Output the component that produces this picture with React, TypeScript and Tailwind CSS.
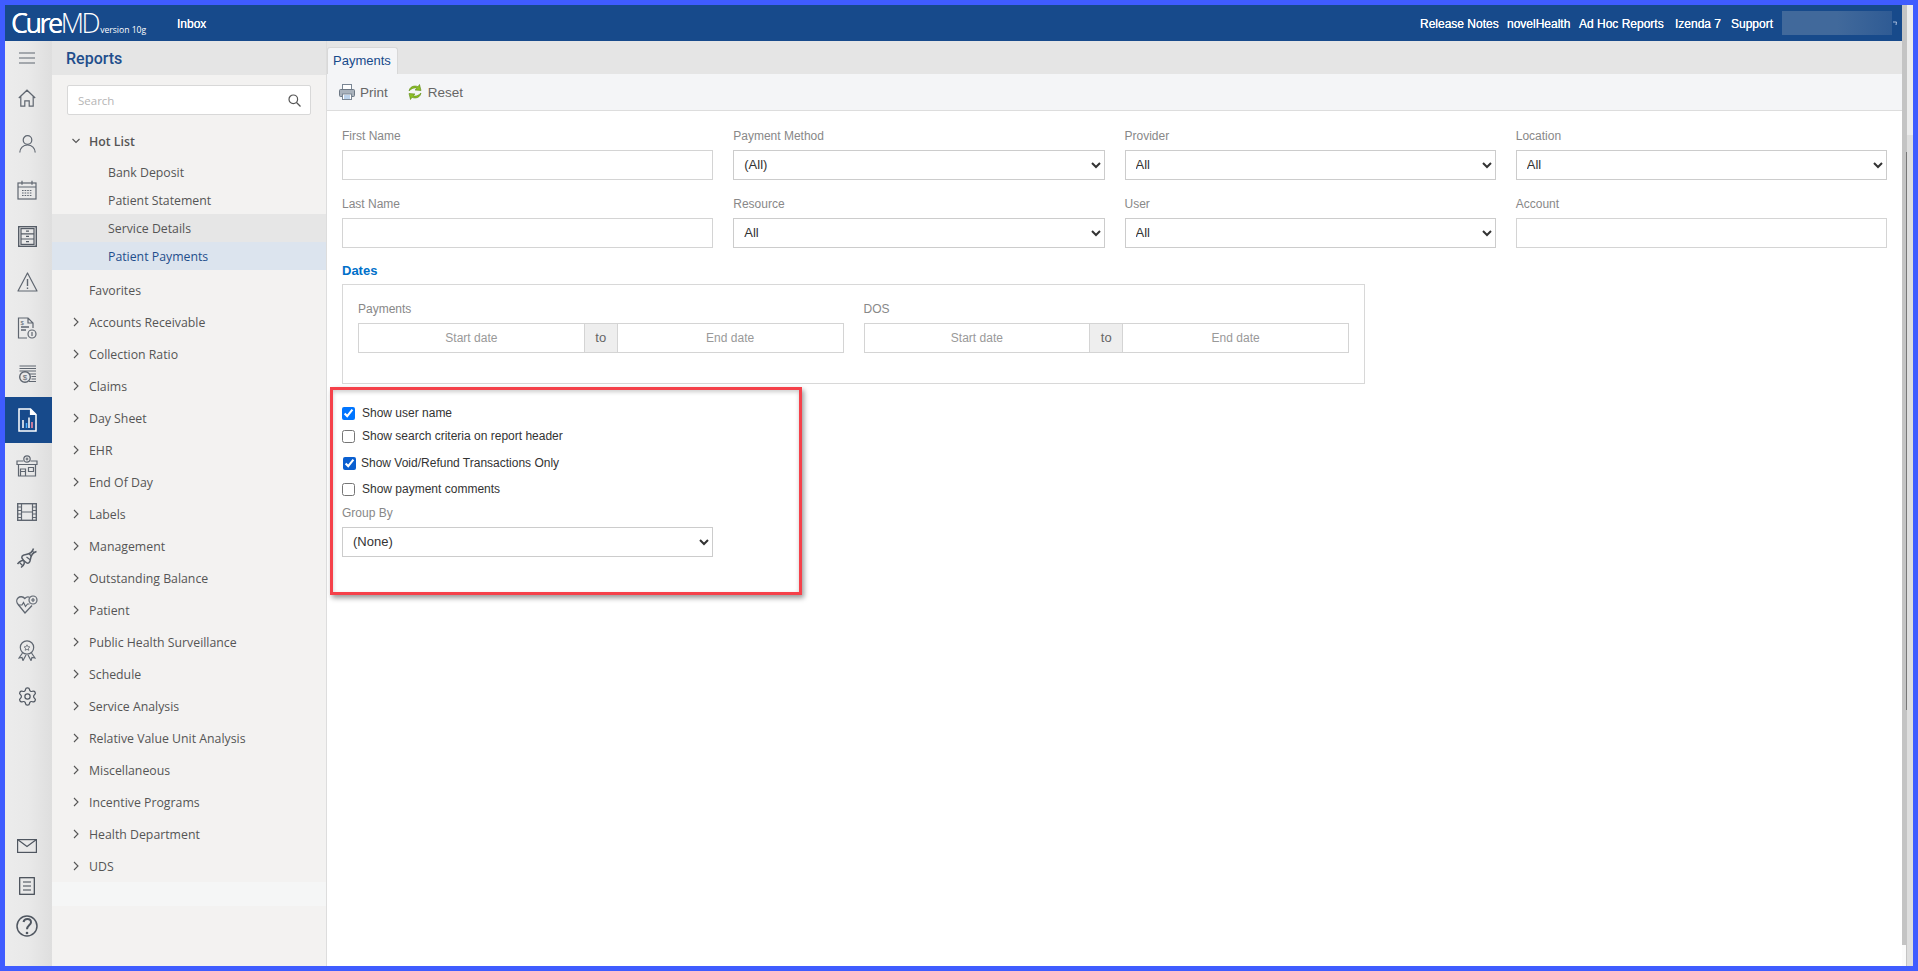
import React from 'react'
import { Settings } from 'lucide-react'

const headerLinks = [
  { label: 'Release Notes', className: 'w-[87px]' },
  { label: 'novelHealth', className: 'w-[72px]' },
  { label: 'Ad Hoc Reports', className: 'w-[96px]' },
  { label: 'Izenda 7', className: 'w-[56px]' },
  { label: 'Support', className: 'w-[51px]' },
]

const reportGroups = [
  'Accounts Receivable',
  'Collection Ratio',
  'Claims',
  'Day Sheet',
  'EHR',
  'End Of Day',
  'Labels',
  'Management',
  'Outstanding Balance',
  'Patient',
  'Public Health Surveillance',
  'Schedule',
  'Service Analysis',
  'Relative Value Unit Analysis',
  'Miscellaneous',
  'Incentive Programs',
  'Health Department',
  'UDS',
]

function RailIcon({ w = 24, h = 24, vb = '0 0 24 24', children, stroke = '#5f6670' }: { w?: number; h?: number; vb?: string; children: React.ReactNode; stroke?: string }) {
  return (
    <svg width={w} height={h} viewBox={vb} fill="none" stroke={stroke} strokeWidth="1.2">
      {children}
    </svg>
  )
}

const railIcons: React.ReactNode[] = [
  // home
  <RailIcon key="home" w={18} h={18} vb="0 0 18 18">
    <path d="M.8 9 9 1.2 17.2 9M2.8 7.5v9.7h4v-5.4h4.400v5.400h4V7.500" />
  </RailIcon>,
  // person
  <RailIcon key="person" w={17} h={18} vb="0 0 17 18">
    <circle cx="8.500" cy="5" r="4.300" />
    <path d="M.8 17.500c0-4.500 3.400-7.500 7.700-7.500s7.700 3 7.700 7.500" />
  </RailIcon>,
  // calendar
  <RailIcon key="calendar" w={20} h={20} vb="0 0 20 20">
    <rect x="1" y="3" width="18" height="16" />
    <path d="M1 7h18M5 .8v4M15 .8v4" />
    <path d="M5 10.500h10M5 13h10M5 15.500h10" strokeDasharray="1.600 1" />
  </RailIcon>,
  // file cabinet
  <RailIcon key="cabinet" w={19} h={21} vb="0 0 19 21" stroke="#555c66">
    <rect x=".7" y=".7" width="17.600" height="19.600" strokeWidth="1.400" />
    <rect x="3" y="2.600" width="13" height="15.800" />
    <path d="M3 7.800h13M3 13h13M8 5.200h3M8 10.400h3M8 15.600h3" />
  </RailIcon>,
  // warning
  <RailIcon key="warning" w={21} h={20} vb="0 0 21 20">
    <path d="M10.500 1 20 19H1z" strokeLinejoin="round" />
    <path d="M10.500 7v7M10.500 15.500v1.500" strokeWidth="1.400" />
  </RailIcon>,
  // statement
  <RailIcon key="statement" w={20} h={22} vb="0 0 20 22">
    <path d="M10 21H1.500V1h9.500l5 5v5M11 1v5h5" />
    <path d="M4 10h8M4 13h5" strokeWidth="1.500" />
    <circle cx="15" cy="17" r="4" />
    <path d="M15 15v4" />
    <text x="3.500" y="7.500" fontSize="6" fill="#5f6670" stroke="none" fontFamily="Liberation Sans, sans-serif">$</text>
  </RailIcon>,
  // payments
  <RailIcon key="payments" w={19} h={18} vb="0 0 19 18">
    <path d="M1.500 1h16.500M1.500 3.500h16.500M1.500 6h16.500M11 9h7M13.500 11.500H18M13.500 14H18M11 16.500h7" />
    <circle cx="7" cy="12" r="5.300" strokeWidth="1.400" />
    <text x="4.700" y="15" fontSize="8" fill="#5f6670" stroke="none" fontFamily="Liberation Sans, sans-serif">$</text>
  </RailIcon>,
  // reports, active
  <RailIcon key="reports" w={19} h={24} vb="0 0 19 24" stroke="#ffffff">
    <path d="M1 1h11.500L18 6.500V23H1z" strokeWidth="1.500" />
    <path d="M12.500 1v5.500H18" fill="#ffffff" />
    <path d="M5 12v8" stroke="#ffffff" strokeWidth="1.500" />
    <path d="M8.500 15v5" stroke="#4fb3ff" strokeWidth="1.500" />
    <path d="M11 9.500V20" stroke="#ffffff" strokeWidth="1.500" />
    <path d="M14 14v6" stroke="#ff8aa0" strokeWidth="1.500" />
  </RailIcon>,
  // clinic
  <RailIcon key="clinic" w={22} h={22} vb="0 0 22 22">
    <circle cx="11" cy="4" r="3.200" />
    <path d="M11 2.600v2.800M9.600 4h2.800" />
    <path d="M7.500 6H1v3.500h20V6h-6.500M2.500 9.500V21h17V9.500" />
    <path d="M4.500 21v-7h5v7M4.500 16.500h5M12.500 12.500h5v4h-5z" />
  </RailIcon>,
  // film
  <RailIcon key="film" w={20} h={18} vb="0 0 20 18">
    <rect x=".7" y=".7" width="18.600" height="16.600" strokeWidth="1.400" />
    <path d="M4.500.7v16.600M15.500.7v16.600M4.500 9h11M.7 4h3.800M.7 7.500h3.800M.7 11h3.800M.7 14.500h3.800M15.500 4h3.800M15.500 7.500h3.800M15.500 11h3.800M15.500 14.500h3.800" />
  </RailIcon>,
  // dna
  <RailIcon key="dna" w={22} h={22} vb="0 0 22 22" stroke="#555c66">
    <path d="M1.500 17C4 13.500 7 12.500 9.500 15s4.500 1 5-3 2.500-6.500 6-7.500" strokeWidth="1.500" />
    <path d="M5 20.500C8.500 18 9.500 15 7 12.500s-1-4.500 3-5 6.500-2.500 7.500-6" strokeWidth="1.500" />
    <path d="m3.500 15.500 3 3M10.500 10l4 3M13 6.500l2.500 3M16.500 4l1.500 2" />
  </RailIcon>,
  // heart
  <RailIcon key="heart" w={22} h={19} vb="0 0 22 19">
    <path d="M13.500 2.300C12 1.500 10.300 2 8.800 3.500 7 1.300 3.800 1.200 2 3c-1.800 1.800-1.500 4.700.2 6.500L9 18l7-7.500" strokeWidth="1.300" />
    <path d="M2.500 10H6l1.500-2.500 2 4 2-2.500h2" />
    <circle cx="17" cy="5" r="4" />
    <path d="M17 3v4M15 5h4" />
  </RailIcon>,
  // award
  <RailIcon key="award" w={18} h={21} vb="0 0 18 21">
    <circle cx="9" cy="7.500" r="6.700" />
    <path d="m9 4.800.9 1.900 2 .2-1.500 1.400.4 2L9 9.300l-1.800 1 .4-2-1.500-1.400 2-.2z" strokeWidth=".8" />
    <path d="M4.500 13 1 18l3-.5 1 3L8 15M13.500 13l3.500 5-3-.5-1 3-3-5.500" />
  </RailIcon>,
  // gear
  <Settings key="gear" size={21} strokeWidth={1.4} color="#4f5660" />,
]

const bottomIcons: React.ReactNode[] = [
  <RailIcon key="mail" w={20} h={14} vb="0 0 20 14" stroke="#4f5660">
    <rect x=".6" y=".6" width="18.800" height="12.800" />
    <path d="m.6.6 9.400 7 9.400-7" />
  </RailIcon>,
  <RailIcon key="list" w={16} h={18} vb="0 0 16 18" stroke="#3f4650">
    <rect x=".7" y=".7" width="14.600" height="16.600" />
    <path d="M4 5h8M4 9h8M4 13h8" />
  </RailIcon>,
  <RailIcon key="help" w={22} h={22} vb="0 0 22 22" stroke="#4f5660">
    <circle cx="11" cy="11" r="10" strokeWidth="1.500" />
    <path d="M7.500 7c.5-2 2-3 3.800-3 2.200 0 3.700 1.400 3.700 3.300 0 2.700-3.800 3-4 7" strokeWidth="2" />
    <circle cx="11" cy="18" r="1.300" fill="#4f5660" stroke="none" />
  </RailIcon>,
]

function Chevron({ open }: { open?: boolean }) {
  return (
    <svg width="8" height="10" viewBox="0 0 8 10" fill="none" stroke="#555" strokeWidth="1.100" className="shrink-0 mb-[2px]">
      {open ? <path d="M.5 3 4 6.500 7.500 3" /> : <path d="m2 1 4 4-4 4" />}
    </svg>
  )
}

function Field({ label, select, value }: { label: string; select?: boolean; value?: string }) {
  return (
    <div>
      <div className="h-[18px] leading-[20px] mb-[6px] text-[12px] text-[#888888]">{label}</div>
      {select ? (
        <select defaultValue={value} className="block w-full h-[30px] pl-[6px] pb-[2px] border border-[#cccccc] bg-white text-[13px] text-[#333333] outline-none">
          <option>{value}</option>
        </select>
      ) : (
        <input className="block w-full h-[30px] border border-[#d4d4d4] bg-white outline-none" />
      )}
    </div>
  )
}

function DateRange({ label }: { label: string }) {
  return (
    <div>
      <div className="h-[18px] leading-[18px] mb-[5px] text-[12px] text-[#888888]">{label}</div>
      <div className="flex h-[30px] border border-[#d4d4d4] text-[12px] text-[#999999]">
        <div className="flex-1 flex items-center justify-center">Start date</div>
        <div className="w-[34px] flex items-center justify-center bg-[#eeeeee] border-x border-[#d4d4d4] text-[13px] text-[#666666]">to</div>
        <div className="flex-1 flex items-center justify-center">End date</div>
      </div>
    </div>
  )
}

function CheckRow({ label, checked, className, accent, gap }: { label: string; checked?: boolean; className: string; accent?: string; gap?: string }) {
  return (
    <label className={`flex items-center h-[18px] text-[12px] text-[#333333] ${className}`}>
      <input type="checkbox" defaultChecked={checked} className={`m-0 w-[13px] h-[13px] ${accent ?? 'accent-[#0075ff]'} ${gap ?? 'mr-[7px]'}`} />
      {label}
    </label>
  )
}

export default function App() {
  return (
    <div className="w-[1918px] h-[971px] bg-[#3f5cff] p-[5px] flex overflow-hidden font-['Liberation_Sans',Arial,sans-serif]">
      <div className="flex-1 flex flex-col min-w-0">
        {/* top bar */}
        <header className="h-[36px] shrink-0 bg-[#174a8b] flex items-center text-white text-[12px]">
          <div className="flex items-baseline pl-[6px] w-[172px] font-['Open_Sans',sans-serif]">
            <span className="text-[27px] leading-[36px] tracking-[-2.500px] font-normal [text-shadow:0_0_0.6px_white]">Cure</span>
            <span className="text-[27px] leading-[36px] tracking-[-2.500px] font-light">MD</span>
            <span className="text-[8.600px] ml-[2px]">version 10g</span>
          </div>
          <span className="pt-[2px] [text-shadow:0_0_0.4px_white]">Inbox</span>
          <nav className="ml-auto flex items-center">
            {headerLinks.map((link) => (
              <span key={link.label} className={`${link.className} pt-[2px] [text-shadow:0_0_0.4px_white]`}>{link.label}</span>
            ))}
            <div className="w-[110px] h-[24px] bg-gradient-to-r from-[#41699b] via-[#41699b] to-[#2f5b94]" />
            <div className="w-[10px] flex justify-start pl-[1px]">
              <svg width="4" height="4" viewBox="0 0 4 4" fill="none" stroke="#a9bcdc" strokeWidth="1">
                <path d="M0 1h3.500L3 4" />
              </svg>
            </div>
          </nav>
        </header>

        <div className="flex-1 flex min-h-0">
          {/* icon rail */}
          <aside className="w-[47px] shrink-0 flex flex-col bg-gradient-to-r from-[#ececec] via-[#e9e9e9] to-[#dedede]">
            <div className="h-[34px] shrink-0 flex items-center justify-center pr-[3px]">
              <svg width="16" height="12" viewBox="0 0 16 12" stroke="#5f6670" strokeWidth="1.100">
                <path d="M0 1h16M0 6h16M0 11h16" />
              </svg>
            </div>
            {railIcons.map((icon, i) => (
              <div key={i} className={`h-[46px] shrink-0 flex items-center justify-center pr-[3px] ${i === 7 ? 'bg-[#174a8b]' : ''}`}>
                {icon}
              </div>
            ))}
            <div className="mt-auto pb-[20px]">
              {bottomIcons.map((icon, i) => (
                <div key={i} className="h-[40px] flex items-center justify-center pr-[3px]">{icon}</div>
              ))}
            </div>
          </aside>

          {/* reports tree */}
          <aside className="w-[275px] shrink-0 flex flex-col bg-[#f3f2f1] border-r border-[#dddddd] font-['Open_Sans',sans-serif] text-[12.300px] text-[#555555]">
            <div className="h-[34px] shrink-0 pl-[14px] pt-[2px] flex items-center bg-[#e5e5e5] font-['Roboto',sans-serif] font-medium text-[16px] text-[#1f4e8c]">Reports</div>
            <div className="mx-[15px] mt-[10px] h-[30px] shrink-0 flex items-center justify-between pl-[10px] pr-[9px] bg-white border border-[#d8d8d8] rounded-[2px] text-[11.500px] text-[#b5b5b5]">
              <span className="pt-[2px]">Search</span>
              <svg width="13" height="13" viewBox="0 0 13 13" fill="none" stroke="#555" strokeWidth="1.200">
                <circle cx="5.300" cy="5.300" r="4.300" />
                <path d="m8.500 8.500 4 4" />
              </svg>
            </div>
            <div className="mt-[12px] h-[28px] pt-[2px] shrink-0 flex items-center pl-[20px] gap-[9px] font-semibold">
              <Chevron open />
              Hot List
            </div>
            <div className="mt-[3px] h-[28px] pt-[2px] shrink-0 flex items-center pl-[56px]">Bank Deposit</div>
            <div className="h-[28px] pt-[2px] shrink-0 flex items-center pl-[56px]">Patient Statement</div>
            <div className="h-[28px] pt-[2px] shrink-0 flex items-center pl-[56px] bg-[#e6e6e6]">Service Details</div>
            <div className="h-[28px] pt-[2px] shrink-0 flex items-center pl-[56px] bg-[#dce4ee] text-[#1f4e8c]">Patient Payments</div>
            <div className="mt-[4px] h-[32px] pt-[2px] shrink-0 flex items-center pl-[37px]">Favorites</div>
            {reportGroups.map((group) => (
              <div key={group} className="h-[32px] pt-[2px] shrink-0 flex items-center pl-[20px] gap-[9px]">
                <Chevron />
                {group}
              </div>
            ))}
            <div className="h-[24px] shrink-0 bg-[#f5f6f6]" />
          </aside>

          {/* payments form */}
          <main className="relative flex-1 min-w-0 bg-white">
            <div className="h-[33px] bg-[#e5e5e5] flex items-end">
              <div className="h-[27px] w-[71px] pl-[5px] leading-[26px] bg-[#f4f5f7] border border-b-0 border-[#d8d8d8] rounded-t-[3px] text-[13px] text-[#174a8b]">Payments</div>
            </div>
            <div className="h-[37px] bg-[#f4f5f7] border-b border-[#dddddd] flex items-center pl-[12px] text-[13.500px] text-[#666666]">
              <svg width="16" height="16" viewBox="0 0 16 16" className="mr-[5px]">
                <rect x="3.500" y=".5" width="9" height="6" fill="#ffffff" stroke="#7a8694" />
                <rect x=".5" y="5.500" width="15" height="7" rx="1" fill="#a9b2bc" stroke="#6d7885" />
                <rect x="3.500" y="10" width="9" height="5.500" fill="#ffffff" stroke="#7a8694" />
                <path d="M5 12h6M5 14h6" stroke="#7aa7d8" />
              </svg>
              <span className="pt-[2px]">Print</span>
              <svg width="16" height="16" viewBox="0 0 16 16" fill="none" className="ml-[19px] mr-[5px]">
                <path d="M2 7c.5-3.200 3-5 6-5 1 0 2 .2 3 .8L12.500.5 14 6.500 8 6l2-1.600C8 3.300 5 4 2 7z" fill="#8cbf26" stroke="#5c8a12" strokeWidth=".6" />
                <path d="M14 9c-.5 3.200-3 5-6 5-1 0-2-.2-3-.8l-1.500 2.300L2 9.500l6 .5-2 1.600c2 1.100 5 .4 8-2.600z" fill="#8cbf26" stroke="#5c8a12" strokeWidth=".6" />
              </svg>
              <span className="pt-[2px]">Reset</span>
            </div>

            <div className="px-[15px] pt-[15px]">
              <div className="grid grid-cols-4 gap-x-[20px] gap-y-[14px]">
                <Field label="First Name" />
                <Field label="Payment Method" select value="(All)" />
                <Field label="Provider" select value="All" />
                <Field label="Location" select value="All" />
                <Field label="Last Name" />
                <Field label="Resource" select value="All" />
                <Field label="User" select value="All" />
                <Field label="Account" />
              </div>

              <div className="mt-[13px] mb-[5px] h-[18px] leading-[20px] text-[13px] font-bold text-[#0070c9]">Dates</div>
              <div className="w-[1023px] h-[100px] border border-[#d8d8d8] px-[15px] pt-[15px] grid grid-cols-2 gap-x-[20px] content-start">
                <DateRange label="Payments" />
                <DateRange label="DOS" />
              </div>

              <CheckRow label="Show user name" checked className="mt-[20px]" />
              <CheckRow label="Show search criteria on report header" className="mt-[5px]" />
              <CheckRow label="Show Void/Refund Transactions Only" checked accent="accent-[#0a5fd0] ml-[1px]" gap="mr-[5px]" className="mt-[9px]" />
              <CheckRow label="Show payment comments" className="mt-[8px]" />

              <div className="w-[371px] mt-[5px]">
                <Field label="Group By" select value="(None)" />
              </div>
            </div>

            {/* annotation box over the form */}
            <div className="absolute left-[3px] top-[346px] w-[472px] h-[208px] border-[3px] border-[#f5414a] shadow-[2px_3px_5px_rgba(0,0,0,0.4),inset_0_2px_4px_rgba(0,0,0,0.2)] pointer-events-none" />
          </main>
        </div>
      </div>

      {/* page scrollbar */}
      <div className="w-[11px] shrink-0 flex">
        <div className="w-[4px] flex flex-col bg-[#fbfbfb]">
          <div className="h-[940px] shrink-0 bg-[#c4c4c4]" />
        </div>
        <div className="w-[1px] flex flex-col bg-[#c4c4c4]">
          <div className="h-[147px] shrink-0" />
          <div className="h-[558px] shrink-0 bg-[#777777]" />
        </div>
        <div className="flex-1 flex flex-col bg-[#dedede]">
          <div className="h-[130px] shrink-0 bg-[#ececec]" />
        </div>
      </div>
    </div>
  )
}
